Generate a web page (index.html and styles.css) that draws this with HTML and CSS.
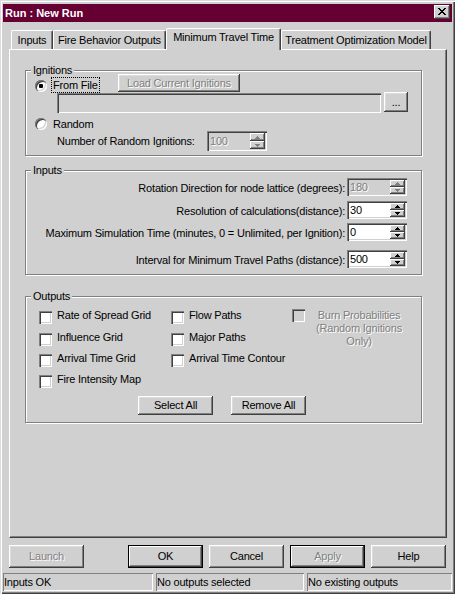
FILE: index.html
```html
<!DOCTYPE html>
<html lang="en">
<head>
<meta charset="utf-8">
<title>Run : New Run</title>
<link rel="stylesheet" href="styles.css">
</head>
<body>
<div class="window">
  <div class="titlebar">
    <span class="title">Run : New Run</span>
    <button class="close" aria-label="Close">
      <svg width="8" height="7" viewBox="0 0 8 7"><path d="M0 0h2v1H0zM6 0h2v1H6zM1 1h2v1H1zM5 1h2v1H5zM2 2h4v1H2zM3 3h2v1H3zM2 4h4v1H2zM1 5h2v1H1zM5 5h2v1H5zM0 6h2v1H0zM6 6h2v1H6z"/></svg>
    </button>
  </div>

  <div class="client">
    <div class="tabs">
      <div class="tab t-inputs">Inputs</div>
      <div class="tab t-fbo">Fire Behavior Outputs</div>
      <div class="tab t-mtt active">Minimum Travel Time</div>
      <div class="tab t-tom">Treatment Optimization Model</div>
    </div>

    <div class="panel">
      <div class="group ign">
        <div class="legend">Ignitions</div>
        <div class="row ign-r1">
          <label class="opt"><span class="radio on"></span><span class="optxt focus">From File</span></label>
          <button class="btn dis load">Load Current Ignitions</button>
        </div>
        <div class="row ign-r2">
          <div class="edit path"></div>
          <button class="btn browse">...</button>
        </div>
        <div class="row ign-r3">
          <label class="opt"><span class="radio"></span><span class="optxt">Random</span></label>
        </div>
        <div class="row ign-r4">
          <span class="lbl">Number of Random Ignitions:</span>
          <div class="spin dis">
            <span class="spin-val">100</span>
            <span class="spin-btns">
              <span class="spin-btn"><svg class="arw" width="5" height="3" viewBox="0 0 5 3"><path d="M2 0h1v1h1v1h1v1H0V2h1V1h1z"/></svg></span>
              <span class="spin-btn"><svg class="arw" width="5" height="3" viewBox="0 0 5 3"><path d="M0 0h5v1H4v1H3v1H2V2H1V1H0z"/></svg></span>
            </span>
          </div>
        </div>
      </div>

      <div class="group inp">
        <div class="legend">Inputs</div>
        <div class="inp-row">
          <span class="lbl">Rotation Direction for node lattice (degrees):</span>
          <div class="spin sm dis">
            <span class="spin-val">180</span>
            <span class="spin-btns">
              <span class="spin-btn"><svg class="arw" width="5" height="3" viewBox="0 0 5 3"><path d="M2 0h1v1h1v1h1v1H0V2h1V1h1z"/></svg></span>
              <span class="spin-btn"><svg class="arw" width="5" height="3" viewBox="0 0 5 3"><path d="M0 0h5v1H4v1H3v1H2V2H1V1H0z"/></svg></span>
            </span>
          </div>
        </div>
        <div class="inp-row r2">
          <span class="lbl">Resolution of calculations(distance):</span>
          <div class="spin sm">
            <span class="spin-val">30</span>
            <span class="spin-btns">
              <span class="spin-btn"><svg class="arw" width="5" height="3" viewBox="0 0 5 3"><path d="M2 0h1v1h1v1h1v1H0V2h1V1h1z"/></svg></span>
              <span class="spin-btn"><svg class="arw" width="5" height="3" viewBox="0 0 5 3"><path d="M0 0h5v1H4v1H3v1H2V2H1V1H0z"/></svg></span>
            </span>
          </div>
        </div>
        <div class="inp-row r3">
          <span class="lbl">Maximum Simulation Time (minutes, 0 = Unlimited, per Ignition):</span>
          <div class="spin sm">
            <span class="spin-val">0</span>
            <span class="spin-btns">
              <span class="spin-btn"><svg class="arw" width="5" height="3" viewBox="0 0 5 3"><path d="M2 0h1v1h1v1h1v1H0V2h1V1h1z"/></svg></span>
              <span class="spin-btn"><svg class="arw" width="5" height="3" viewBox="0 0 5 3"><path d="M0 0h5v1H4v1H3v1H2V2H1V1H0z"/></svg></span>
            </span>
          </div>
        </div>
        <div class="inp-row r4">
          <span class="lbl">Interval for Minimum Travel Paths (distance):</span>
          <div class="spin sm">
            <span class="spin-val">500</span>
            <span class="spin-btns">
              <span class="spin-btn"><svg class="arw" width="5" height="3" viewBox="0 0 5 3"><path d="M2 0h1v1h1v1h1v1H0V2h1V1h1z"/></svg></span>
              <span class="spin-btn"><svg class="arw" width="5" height="3" viewBox="0 0 5 3"><path d="M0 0h5v1H4v1H3v1H2V2H1V1H0z"/></svg></span>
            </span>
          </div>
        </div>
      </div>

      <div class="group out">
        <div class="legend">Outputs</div>
        <div class="out-cols">
          <div class="col c1">
            <label class="chk"><span class="cb"></span><span class="txt">Rate of Spread Grid</span></label>
            <label class="chk"><span class="cb"></span><span class="txt">Influence Grid</span></label>
            <label class="chk"><span class="cb"></span><span class="txt">Arrival Time Grid</span></label>
            <label class="chk"><span class="cb"></span><span class="txt">Fire Intensity Map</span></label>
          </div>
          <div class="col c2">
            <label class="chk"><span class="cb"></span><span class="txt">Flow Paths</span></label>
            <label class="chk"><span class="cb"></span><span class="txt">Major Paths</span></label>
            <label class="chk"><span class="cb"></span><span class="txt">Arrival Time Contour</span></label>
          </div>
          <div class="col c3">
            <label class="chk burn"><span class="cb dis"></span><span class="txt dis-text">Burn Probabilities (Random Ignitions Only)</span></label>
          </div>
        </div>
        <div class="out-btns">
          <button class="btn">Select All</button>
          <button class="btn">Remove All</button>
        </div>
      </div>
    </div>

    <div class="actions">
      <button class="btn dis">Launch</button>
      <button class="btn def ok">OK</button>
      <button class="btn">Cancel</button>
      <button class="btn def dis">Apply</button>
      <button class="btn">Help</button>
    </div>
  </div>

  <div class="statusbar">
    <div class="sb sb1">Inputs OK</div>
    <div class="sb sb2">No outputs selected</div>
    <div class="sb sb3">No existing outputs</div>
  </div>
</div>
</body>
</html>
```

FILE: styles.css
```css
* { box-sizing: border-box; }

body {
  margin: 0;
  font: 11px/13px "Liberation Sans", Arial, sans-serif;
  letter-spacing: -0.2px;
  color: #000;
  background: #d0d0d0;
}

button {
  font: inherit;
  letter-spacing: inherit;
  color: inherit;
  border: 0;
  margin: 0;
  padding: 0;
  background: #d0d0d0;
}

label { display: flex; }

/* ---------- window frame ---------- */
.window {
  width: 455px;
  height: 594px;
  padding: 4px 3px 3px 3px;
  background: #d0d0d0;
  box-shadow:
    inset 1px 1px 0 #dcdcdc,
    inset 2px 2px 0 #fff,
    inset -1px -1px 0 #404040,
    inset -2px -2px 0 #808080;
}

.titlebar {
  height: 18px;
  background: #660033;
  display: flex;
  align-items: flex-start;
  padding-left: 2px;
}
.title {
  color: #fff;
  font-weight: bold;
  line-height: 18px;
  letter-spacing: 0;
}
.close {
  margin: 1px 2px 0 auto;
  width: 16px;
  height: 14px;
  display: flex;
  justify-content: center;
  align-items: flex-start;
  padding-top: 3px;
  box-shadow:
    inset -1px -1px 0 #404040,
    inset 1px 1px 0 #fff,
    inset -2px -2px 0 #808080;
}
.close svg { display: block; fill: #000; }

/* ---------- client / tabs ---------- */
.client { padding: 6px 5px 0 6px; }

.tabs {
  display: flex;
  align-items: flex-end;
  height: 21px;
  padding-left: 2px;
}
.tab {
  height: 19px;
  padding-top: 3px;
  text-align: center;
  white-space: nowrap;
  border-top: 1px solid #fff;
  border-left: 1px solid #fff;
  border-right: 1px solid #404040;
  box-shadow: inset -1px 0 0 #808080;
  border-radius: 2px 2px 0 0;
  background: #d0d0d0;
}
.tab.active {
  height: 22px;
  margin-bottom: -1px;
  padding-top: 2px;
  position: relative;
  z-index: 1;
}
.t-inputs { width: 42px; }
.t-fbo { width: 113px; }
.t-mtt { width: 115px; }
.t-tom { width: 150px; }

.panel {
  width: 438px;
  height: 489px;
  border: 1px solid;
  border-color: #fff #404040 #404040 #fff;
  box-shadow: inset -1px -1px 0 #808080;
  padding: 20px 0 0 15px;
}

/* ---------- group boxes ---------- */
.group {
  position: relative;
  width: 397px;
  border: 1px solid #808080;
  box-shadow: inset 1px 1px 0 #fff, 1px 1px 0 #fff;
}
.legend {
  position: absolute;
  top: -7px;
  left: 5px;
  padding: 0 2px;
  background: #d0d0d0;
  white-space: nowrap;
}

.row { display: flex; align-items: flex-start; }

/* ---------- common controls ---------- */
.btn {
  display: flex;
  align-items: center;
  justify-content: center;
  white-space: nowrap;
  box-shadow:
    inset -1px -1px 0 #404040,
    inset 1px 1px 0 #fff,
    inset -2px -2px 0 #808080,
    inset 2px 2px 0 #dcdcdc;
}
.btn.def {
  box-shadow:
    inset 0 0 0 1px #000,
    inset -2px -2px 0 #404040,
    inset 2px 2px 0 #fff,
    inset -3px -3px 0 #808080;
}
.btn.dis, .dis-text {
  color: #808080;
  text-shadow: 1px 1px 0 #fff;
}

.edit, .spin {
  box-shadow:
    inset 1px 1px 0 #808080,
    inset 2px 2px 0 #404040,
    inset -1px -1px 0 #fff,
    inset -2px -2px 0 #d0d0d0;
}
.edit { background: #d0d0d0; }

.radio {
  flex: none;
  width: 12px;
  height: 12px;
  margin-top: 3px;
  border-radius: 50%;
  background: #fff;
  display: flex;
  align-items: center;
  justify-content: center;
  box-shadow:
    inset 1px 1px 0 #808080,
    inset 2px 2px 0 #404040,
    inset -1px -1px 0 #fff,
    inset -2px -2px 0 #d0d0d0;
}
.radio.on::after {
  content: "";
  width: 4px;
  height: 4px;
  border-radius: 1px;
  background: #000;
}
.optxt {
  margin-left: 4px;
  border: 1px dotted transparent;
  padding: 1px 1px 0 1px;
  white-space: nowrap;
}
.optxt.focus { border-color: #000; }

.cb {
  flex: none;
  width: 13px;
  height: 13px;
  margin-top: 2px;
  background: #fff;
  box-shadow:
    inset 1px 1px 0 #808080,
    inset 2px 2px 0 #404040,
    inset -1px -1px 0 #fff,
    inset -2px -2px 0 #d0d0d0;
}
.cb.dis { background: #d0d0d0; }

.spin {
  display: flex;
  width: 60px;
  height: 20px;
  padding: 2px;
  background: #fff;
}
.spin.sm { height: 18px; }
.spin.dis { background: #d0d0d0; }
.spin-val {
  flex: 1;
  padding-left: 1px;
  display: flex;
  align-items: center;
}
.spin.dis .spin-val {
  color: #808080;
  text-shadow: 1px 1px 0 #fff;
}
.spin-btns {
  width: 15px;
  display: flex;
  flex-direction: column;
}
.spin-btn {
  flex: 1;
  display: flex;
  align-items: center;
  justify-content: center;
  background: #d0d0d0;
  box-shadow:
    inset -1px -1px 0 #404040,
    inset 1px 1px 0 #fff,
    inset -2px -2px 0 #808080;
}
.arw { display: block; fill: #000; }
.spin.dis .arw { fill: #808080; }

/* ---------- ignitions ---------- */
.ign { height: 86px; padding: 3px 0 0 9px; }
.ign-r1 { height: 18px; }
.ign-r1 .opt { width: 83px; margin-top: 3px; }
.load { width: 122px; height: 18px; }
.ign-r2 { height: 21px; padding-left: 22px; }
.path { width: 324px; height: 20px; margin-top: 1px; }
.browse { width: 24px; height: 20px; margin-left: 3px; }
.ign-r3 { height: 15px; margin-top: 3px; }
.ign-r3 .radio { margin-top: 2px; }
.ign-r4 { height: 20px; padding-left: 22px; }
.ign-r4 .lbl { width: 150px; padding-top: 4px; white-space: nowrap; }

/* ---------- inputs ---------- */
.inp { height: 105px; margin-top: 14px; padding: 7px 14px 0 0; }
.inp-row {
  display: flex;
  justify-content: flex-end;
  align-items: flex-start;
  height: 18px;
}
.inp-row .lbl { padding-top: 4px; margin-right: 2px; white-space: nowrap; }
.inp-row.r2 { margin-top: 5px; }
.inp-row.r3 { margin-top: 4px; }
.inp-row.r4 { margin-top: 9px; }

/* ---------- outputs ---------- */
.out { height: 127px; margin-top: 21px; padding: 12px 0 0 13px; }
.out-cols { display: flex; height: 77px; }
.col { display: flex; flex-direction: column; gap: 8px; }
.c1 { width: 132px; }
.c2 { width: 121px; }
.c1 > :first-child, .c2 > :first-child { margin-bottom: 1px; }
.chk { height: 13px; align-items: flex-start; }
.chk .txt { margin-left: 5px; white-space: nowrap; }
.burn .cb { margin-top: 0; }
.burn .txt {
  width: 100px;
  margin-left: 4px;
  text-align: center;
  white-space: normal;
}
.out-btns {
  display: flex;
  gap: 18px;
  margin-top: 10px;
  padding-left: 99px;
}
.out-btns .btn { width: 75px; height: 19px; }

/* ---------- bottom buttons ---------- */
.actions { display: flex; gap: 6px; margin-top: 7px; }
.actions .btn { width: 75px; height: 23px; }
.actions .ok { margin-left: 38px; }

/* ---------- status bar ---------- */
.statusbar { display: flex; gap: 3px; margin-top: 5px; height: 18px; }
.sb {
  padding-left: 1px;
  line-height: 18px;
  white-space: nowrap;
  box-shadow: inset 1px 1px 0 #808080, inset -1px -1px 0 #fff;
}
.sb1 { width: 150px; }
.sb2 { width: 148px; }
.sb3 { width: 145px; }
```
